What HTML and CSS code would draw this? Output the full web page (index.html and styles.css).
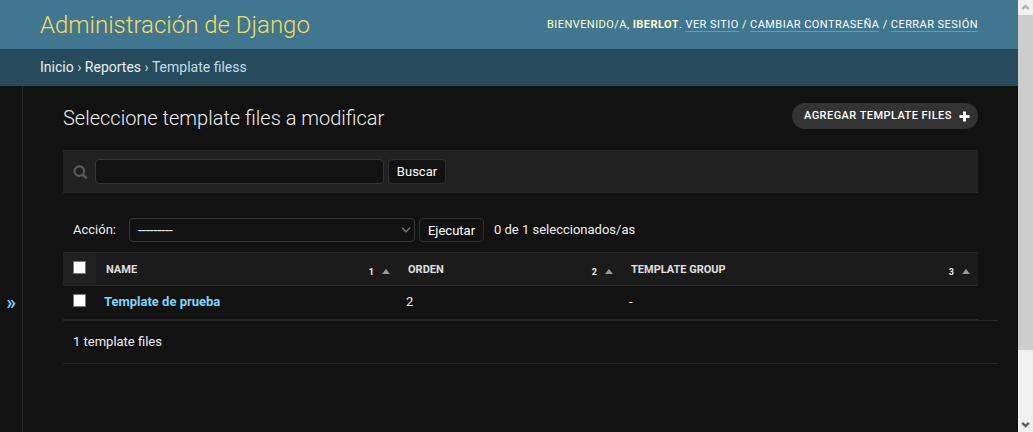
FILE: index.html
```html
<!DOCTYPE html>
<html lang="es">
<head>
<meta charset="utf-8">
<title>Template filess</title>
<link rel="stylesheet" href="styles.css">
</head>
<body>
<div class="page">
  <header class="header">
    <div class="branding">Administración de Django</div>
    <div class="user-tools">Bienvenido/a, <strong>iberlot</strong>. <a>Ver sitio</a> / <a>Cambiar contraseña</a> / <a>Cerrar sesión</a></div>
  </header>
  <nav class="breadcrumbs"><a>Inicio</a> › <a>Reportes</a> › Template filess</nav>
  <div class="main">
    <div class="nav-toggle"><span>»</span></div>
    <main class="content">
      <div class="title-row">
        <h1>Seleccione template files a modificar</h1>
        <a class="add-link"><span>Agregar template files</span>
          <svg width="11" height="11" viewBox="0 0 11 11"><path d="M4 .5h3V4h3.5v3H7v3.5H4V7H.5V4H4z" fill="#fff"/></svg>
        </a>
      </div>
      <div class="toolbar">
        <svg class="search-icon" width="15" height="15" viewBox="0 0 15 15" fill="none" stroke="#5a5a5a"><circle cx="6.3" cy="6.1" r="4.8" stroke-width="2.2"/><path d="M9.8 9.6L13.6 13.4" stroke-width="2.6"/></svg>
        <div class="search-input"></div>
        <div class="button search-button">Buscar</div>
      </div>
      <div class="actions">
        <span class="action-label">Acción:</span>
        <div class="select"><span>---------</span>
          <svg width="10" height="6" viewBox="0 0 10 6"><path d="M1 .8l4 4 4-4" fill="none" stroke="#777" stroke-width="1.4"/></svg>
        </div>
        <div class="button run-button">Ejecutar</div>
        <span class="counter">0 de 1 seleccionados/as</span>
      </div>
      <div class="grid thead">
        <div class="check"><i class="box"></i></div>
        <div class="th"><b>Name</b><span class="sort">1</span><i class="arrow"></i></div>
        <div class="th"><b>Orden</b><span class="sort">2</span><i class="arrow"></i></div>
        <div class="th"><b>Template group</b><span class="sort">3</span><i class="arrow"></i></div>
      </div>
      <div class="grid row">
        <div class="check"><i class="box"></i></div>
        <div class="td name">Template de prueba</div>
        <div class="td">2</div>
        <div class="td">-</div>
      </div>
      <div class="paginator">1 template files</div>
    </main>
  </div>
</div>
<div class="scrollbar">
  <svg width="15" height="15" viewBox="0 0 15 15"><path d="M4.2 9.2L7.5 5.9l3.3 3.3" fill="none" stroke="#b5b5b5" stroke-width="2.4"/></svg>
  <div class="thumb"></div>
  <svg class="down" width="15" height="15" viewBox="0 0 15 15"><path d="M4.2 5.8l3.3 3.3 3.3-3.3" fill="none" stroke="#606060" stroke-width="2.4"/></svg>
</div>
</body>
</html>
```
FILE: styles.css
```css
* { box-sizing: border-box; }
body {
  margin: 0;
  height: 432px;
  display: flex;
  overflow: hidden;
  background: #121212;
  color: #eee;
  font: 13px/16px Roboto, "Liberation Sans", sans-serif;
}
.page { flex: 1; min-width: 0; display: flex; flex-direction: column; }
.header {
  height: 49px;
  padding: 0 40px;
  display: flex;
  justify-content: space-between;
  background: #417690;
  color: #ffc;
}
.branding { padding-top: 1px; font-size: 24px; font-weight: 300; line-height: 48px; color: #f5dd5d; white-space: nowrap; }
.user-tools {
  padding-top: 17px;
  font-size: 11px;
  letter-spacing: .445px;
  text-transform: uppercase;
  white-space: nowrap;
}
.user-tools a { color: #fff; border-bottom: 1px solid rgba(255, 255, 255, .25); }
.breadcrumbs {
  height: 37px;
  padding-left: 40px;
  background: #264b5d;
  color: #c4dce8;
  font-size: 14px;
  line-height: 36px;
}
.breadcrumbs a { color: #eee; }
.main { flex: 1; display: flex; }
.nav-toggle {
  flex: none;
  width: 23px;
  border-right: 1px solid #272727;
  color: #81d4fa;
  font-size: 20px;
  font-weight: 500;
  line-height: 24px;
  text-align: center;
  padding-top: 204px;
}
.content { flex: 1; min-width: 0; padding: 16px 40px 0; }
.title-row { height: 48px; display: flex; justify-content: space-between; }
h1 { margin: 0; font-size: 20px; font-weight: 300; line-height: 32px; }
.add-link {
  width: 186px;
  height: 26px;
  margin-top: 1px;
  padding: 0 8px 0 12px;
  display: flex;
  justify-content: space-between;
  align-items: center;
  border-radius: 13px;
  background: #333;
  color: #fff;
  font-size: 11px;
  font-weight: 500;
  letter-spacing: .45px;
  text-transform: uppercase;
  white-space: nowrap;
}
.toolbar {
  height: 43px;
  padding: 8px 10px;
  display: flex;
  border: solid #272727;
  border-width: 1px 0;
  background: #212121;
}
.search-icon { margin: 6px 7px 0 0; }
.search-input { width: 289px; height: 25px; margin-right: 4px; border: 1px solid #353535; border-radius: 4px; background: #121212; }
.button { border: 1px solid #2f2f2f; border-radius: 4px; background: #121212; text-align: center; color: #fff; }
.search-button { width: 58px; height: 25px; line-height: 24px; }
.actions { height: 59px; padding: 25px 10px 0; display: flex; line-height: 23px; }
.action-label { width: 56px; }
.select {
  width: 286px;
  height: 24px;
  margin-right: 4px;
  padding: 0 3px 0 8px;
  display: flex;
  justify-content: space-between;
  align-items: center;
  border: 1px solid #353535;
  border-radius: 4px;
}
.select span { font-size: 15px; letter-spacing: -.3px; }
.run-button { width: 65px; height: 24px; margin-right: 10px; }
.grid { display: grid; grid-template-columns: 33px 302px 223px 357px; }
.thead { height: 34px; border: solid #272727; border-width: 1px 0; background: #1b1b1b; }
.check { padding: 8px 0 0 10px; }
.thead .check { background: #212121; }
.box { display: block; width: 13px; height: 13px; border: 1px solid #767676; background: #fff; }
.th { display: flex; padding: 9px 8px 0 10px; font-size: 11px; text-transform: uppercase; }
.th b { flex: 1; color: #e0e0e0; }
.sort { margin: 2px 8px 0 0; font-size: 9px; font-weight: 700; }
.arrow { width: 8px; height: 5px; margin-top: 7px; background: #999; clip-path: polygon(50% 0, 100% 100%, 0 100%); }
.row { height: 34px; border-bottom: 1px solid #272727; }
.td { padding: 8px; }
.name { color: #81d4fa; font-weight: 700; }
.paginator { width: 935px; height: 44px; padding: 13px 10px 0; border: solid #272727; border-width: 1px 0; }
.scrollbar { flex: none; width: 15px; display: flex; flex-direction: column; background: #f0f0f0; }
.thumb { height: 335px; background: #cdcdcd; }
.down { margin-top: auto; }
```
